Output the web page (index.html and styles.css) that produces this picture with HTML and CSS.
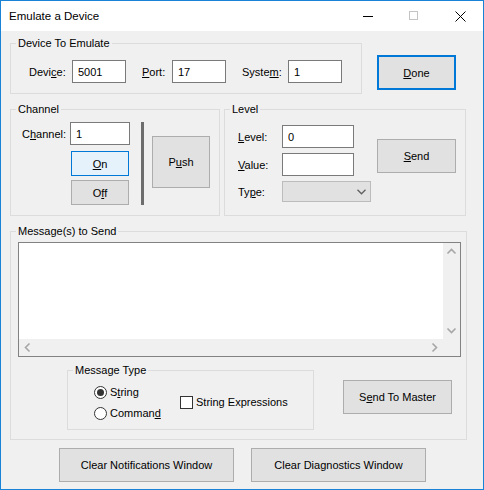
FILE: index.html
```html
<!DOCTYPE html>
<html>
<head>
<meta charset="utf-8">
<link rel="stylesheet" href="styles.css">
</head>
<body>
<div class="window">
  <div class="titlebar">
    <div class="title">Emulate a Device</div>
    <div class="cap-btn"><svg width="10" height="10" viewBox="0 0 10 10"><line x1="0" y1="5.5" x2="10" y2="5.5" stroke="#000" stroke-width="1"/></svg></div>
    <div class="cap-btn"><svg width="10" height="10" viewBox="0 0 10 10"><rect x="0.5" y="0.5" width="8" height="8" fill="none" stroke="#c4c4c4" stroke-width="1"/></svg></div>
    <div class="cap-btn"><svg width="11" height="11" viewBox="0 0 11 11"><path d="M0.5 0.5 L10.5 10.5 M10.5 0.5 L0.5 10.5" stroke="#000" stroke-width="1" fill="none"/></svg></div>
  </div>
  <div class="content">
    <div class="row1">
      <div class="group dev-group">
        <div class="group-title">Device To Emulate</div>
        <div class="dev-row">
          <span class="lbl w43">Devi<u>c</u>e:</span>
          <input class="tb w54" type="text" value="5001">
          <span class="lbl w30 ml16"><u>P</u>ort:</span>
          <input class="tb w54" type="text" value="17">
          <span class="lbl w46 ml16">Syste<u>m</u>:</span>
          <input class="tb w54" type="text" value="1">
        </div>
      </div>
      <button class="btn btn-done"><span><u>D</u>one</span></button>
    </div>

    <div class="row2">
      <div class="group ch-group">
        <div class="group-title">Channel</div>
        <div class="ch-body">
          <div class="ch-left">
            <div class="ch-field">
              <span class="lbl w48">C<u>h</u>annel:</span>
              <input class="tb w60" type="text" value="1">
            </div>
            <button class="btn btn-on"><span><u>O</u>n</span></button>
            <button class="btn btn-off"><span>O<u>f</u>f</span></button>
          </div>
          <div class="vbar"></div>
          <button class="btn btn-push"><span>P<u>u</u>sh</span></button>
        </div>
      </div>
      <div class="group lv-group">
        <div class="group-title">Level</div>
        <div class="lv-body">
          <div class="lv-grid">
            <span class="lbl"><u>L</u>evel:</span>
            <input class="tb w72" type="text" value="0">
            <span class="lbl"><u>V</u>alue:</span>
            <input class="tb w72" type="text" value="">
            <span class="lbl">Ty<u>p</u>e:</span>
            <div class="combo"><svg width="9" height="6" viewBox="0 0 9 6"><polyline points="0.5,0.8 4.5,4.8 8.5,0.8" fill="none" stroke="#606060" stroke-width="1.3"/></svg></div>
          </div>
          <button class="btn btn-send"><span><u>S</u>end</span></button>
        </div>
      </div>
    </div>

    <div class="group msg-group">
      <div class="group-title">Message(s) to Send</div>
      <div class="msg-box">
        <textarea class="msg-text"></textarea>
        <div class="vscroll">
          <div class="sb-cell"><svg width="17" height="17" viewBox="0 0 17 17"><polyline points="4.5,10.5 8.5,6.5 12.5,10.5" fill="none" stroke="#a6a6a6" stroke-width="1.6"/></svg></div>
          <div class="sb-cell"><svg width="17" height="17" viewBox="0 0 17 17"><polyline points="4.5,6.5 8.5,10.5 12.5,6.5" fill="none" stroke="#a6a6a6" stroke-width="1.6"/></svg></div>
        </div>
        <div class="hscroll">
          <div class="sb-cell"><svg width="17" height="17" viewBox="0 0 17 17"><polyline points="10.5,4.5 6.5,8.5 10.5,12.5" fill="none" stroke="#a6a6a6" stroke-width="1.6"/></svg></div>
          <div class="sb-cell"><svg width="17" height="17" viewBox="0 0 17 17"><polyline points="6.5,4.5 10.5,8.5 6.5,12.5" fill="none" stroke="#a6a6a6" stroke-width="1.6"/></svg></div>
        </div>
        <div class="sb-corner"></div>
      </div>
      <div class="msg-bottom">
        <div class="group mt-group">
          <div class="group-title">Message Type</div>
          <div class="mt-body">
            <div class="radios">
              <div class="opt">
                <svg width="13" height="13" viewBox="0 0 13 13"><circle cx="6.5" cy="6.5" r="6" fill="#fff" stroke="#333" stroke-width="1"/><circle cx="6.5" cy="6.5" r="3.5" fill="#333"/></svg>
                <span>S<u>t</u>ring</span>
              </div>
              <div class="opt">
                <svg width="13" height="13" viewBox="0 0 13 13"><circle cx="6.5" cy="6.5" r="6" fill="#fff" stroke="#333" stroke-width="1"/></svg>
                <span>Comman<u>d</u></span>
              </div>
            </div>
            <div class="opt check">
              <svg width="13" height="13" viewBox="0 0 13 13"><rect x="0.5" y="0.5" width="12" height="12" fill="#fff" stroke="#333" stroke-width="1"/></svg>
              <span>String Expressions</span>
            </div>
          </div>
        </div>
        <button class="btn btn-stm"><span>S<u>e</u>nd To Master</span></button>
      </div>
    </div>

    <div class="bottom-row">
      <button class="btn btn-wide"><span>Clear Notifications Window</span></button>
      <button class="btn btn-wide"><span>Clear Diagnostics Window</span></button>
    </div>
  </div>
</div>
</body>
</html>
```

FILE: styles.css
```css
* { box-sizing: border-box; }
html, body { margin: 0; padding: 0; }
body {
  font-family: "Liberation Sans", Arial, sans-serif;
  font-size: 11px;
  color: #000;
}
u { text-decoration: underline; text-underline-offset: 1px; }

.window {
  width: 484px;
  height: 490px;
  border: 1px solid #1883d7;
  background: #f0f0f0;
  display: flex;
  flex-direction: column;
}
.titlebar {
  height: 30px;
  flex: none;
  background: #fff;
  display: flex;
  align-items: center;
}
.title {
  flex: 1;
  padding-left: 8px;
  font-size: 11.5px;
}
.cap-btn {
  width: 46px;
  height: 30px;
  display: flex;
  align-items: center;
  justify-content: center;
}
.cap-btn svg { display: block; }

.content { padding: 12px 0 0 9px; }

.group { border: 1px solid #dcdcdc; }
.group-title {
  width: fit-content;
  height: 14px;
  line-height: 14px;
  margin: -8px 0 0 5px;
  padding: 0 2px;
  background: #f0f0f0;
}

.lbl { display: inline-block; white-space: nowrap; }
.w30 { width: 30px; }
.w43 { width: 43px; }
.w46 { width: 46px; }
.w48 { width: 48px; }
.w54 { width: 54px; }
.w60 { width: 60px; }
.w72 { width: 72px; }
.ml16 { margin-left: 16px; }

.tb {
  height: 23px;
  border: 1px solid #7a7a7a;
  background: #fff;
  padding: 0 0 0 5px;
  margin: 0;
  font: inherit;
  color: #000;
  outline: none;
}

.btn {
  display: flex;
  align-items: center;
  justify-content: center;
  background: #e1e1e1;
  border: 1px solid #adadad;
  padding: 0;
  margin: 0;
  font: inherit;
  color: #000;
  border-radius: 0;
}

/* Row 1 */
.row1 { display: flex; align-items: flex-start; }
.dev-group { width: 352px; height: 51px; }
.dev-row {
  display: flex;
  align-items: center;
  margin-top: 10px;
  padding-left: 18px;
}
.btn-done {
  width: 79px;
  height: 35px;
  margin: 12px 0 0 15px;
  border: 2px solid #0078d7;
}

/* Row 2 */
.row2 { display: flex; align-items: flex-start; margin-top: 15px; }
.ch-group { width: 210px; height: 107px; }
.ch-body { display: flex; align-items: flex-start; padding-left: 11px; }
.ch-left { display: flex; flex-direction: column; margin-top: 6px; }
.ch-field { display: flex; align-items: center; }
.btn-on {
  width: 58px;
  height: 25px;
  margin: 6px 0 0 49px;
  background: #e5f1fb;
  border-color: #0078d7;
}
.btn-off { width: 58px; height: 25px; margin: 4px 0 0 49px; }
.vbar { width: 3px; height: 83px; background: #6d6d6d; margin: 6px 0 0 11px; }
.btn-push { width: 58px; height: 52px; margin: 20px 0 0 8px; }

.lv-group { width: 242px; height: 107px; margin-left: 4px; }
.lv-body { display: flex; align-items: flex-start; padding-left: 13px; }
.lv-grid {
  display: grid;
  grid-template-columns: 44px 89px;
  row-gap: 5px;
  align-items: center;
  justify-items: start;
  margin-top: 9px;
}
.combo {
  width: 89px;
  height: 21px;
  background: #e1e1e1;
  border: 1px solid #bcbcbc;
  display: flex;
  align-items: center;
  justify-content: flex-end;
  padding-right: 4px;
}
.combo svg { display: block; }
.btn-send { width: 79px; height: 34px; margin: 23px 0 0 6px; }

/* Messages */
.msg-group { width: 457px; height: 209px; margin-top: 15px; }
.msg-box {
  width: 443px;
  height: 115px;
  margin: 4px 0 0 7px;
  border: 1px solid #828282;
  background: #f0f0f0;
  display: grid;
  grid-template-columns: 1fr 17px;
  grid-template-rows: 1fr 17px;
}
.msg-text {
  border: 0;
  margin: 0;
  padding: 0;
  resize: none;
  outline: none;
  background: #fff;
  font: inherit;
  width: 100%;
  height: 100%;
  display: block;
}
.vscroll { display: flex; flex-direction: column; justify-content: space-between; }
.hscroll { display: flex; justify-content: space-between; }
.sb-cell { width: 17px; height: 17px; }
.sb-cell svg { display: block; }

.msg-bottom { display: flex; align-items: flex-start; margin-top: 13px; }
.mt-group { width: 247px; height: 60px; margin-left: 56px; }
.mt-body { display: flex; align-items: flex-start; padding-left: 26px; }
.radios { width: 86px; display: flex; flex-direction: column; gap: 5px; margin-top: 7px; }
.opt { display: flex; align-items: center; gap: 3px; height: 16px; white-space: nowrap; }
.opt svg { display: block; flex: none; }
.check { margin-top: 17px; }
.btn-stm { width: 109px; height: 34px; margin: 10px 0 0 29px; }

.bottom-row { display: flex; gap: 17px; margin-top: 8px; padding-left: 49px; }
.btn-wide { width: 175px; height: 34px; }
```
